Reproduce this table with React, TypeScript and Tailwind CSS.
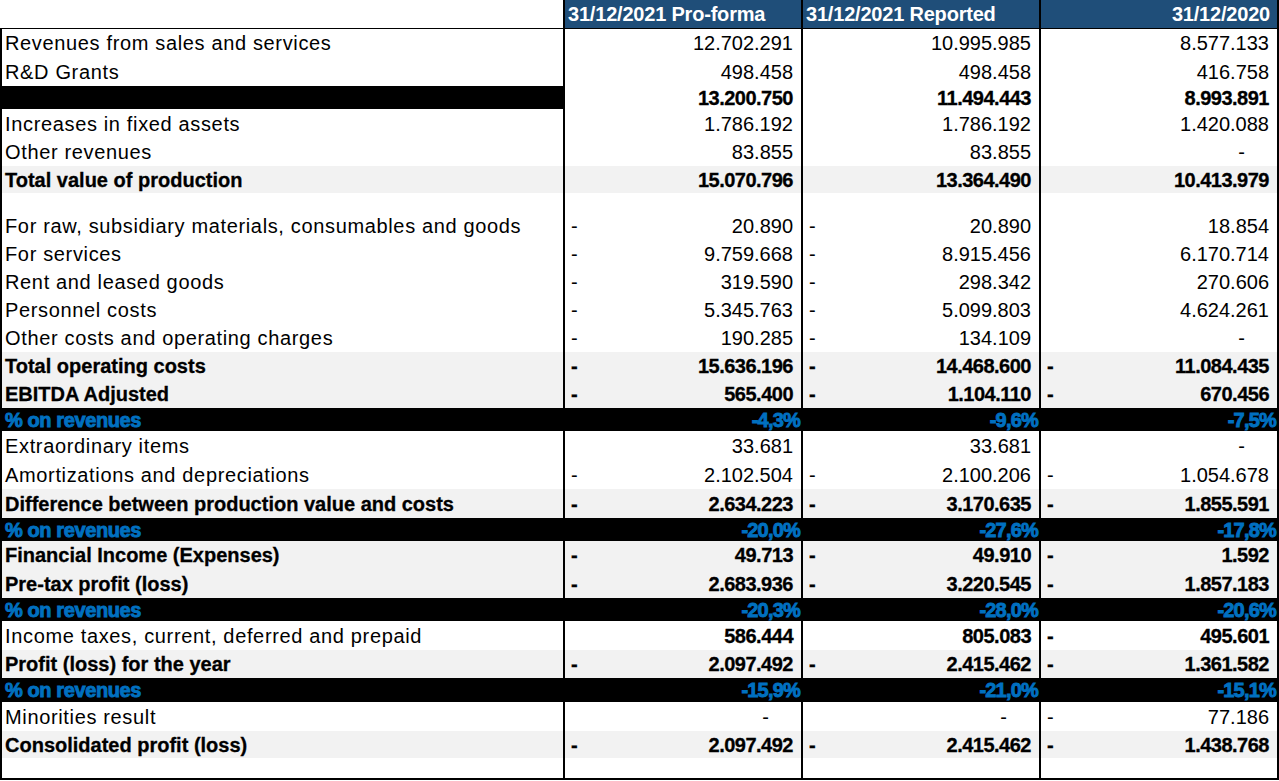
import React from "react";

type Cell = { v?: string; dash?: boolean; zero?: boolean };
type Kind = "normal" | "gray" | "opRev" | "pct" | "empty";
type Row = {
  label?: string;
  kind: Kind;
  h: number;
  boldVals?: boolean;
  cells?: Cell[];
};

const N = (v: string): Cell => ({ v });
const D = (v: string): Cell => ({ v, dash: true });
const Z: Cell = { zero: true };

const rows: Row[] = [
  { label: "Revenues from sales and services", kind: "normal", h: 28, cells: [N("12.702.291"), N("10.995.985"), N("8.577.133")] },
  { label: "R&D Grants", kind: "normal", h: 29, cells: [N("498.458"), N("498.458"), N("416.758")] },
  { label: "Operating revenues", kind: "opRev", h: 23, boldVals: true, cells: [N("13.200.750"), N("11.494.443"), N("8.993.891")] },
  { label: "Increases in fixed assets", kind: "normal", h: 29, cells: [N("1.786.192"), N("1.786.192"), N("1.420.088")] },
  { label: "Other revenues", kind: "normal", h: 28, cells: [N("83.855"), N("83.855"), Z] },
  { label: "Total value of production", kind: "gray", h: 27, boldVals: true, cells: [N("15.070.796"), N("13.364.490"), N("10.413.979")] },
  { kind: "empty", h: 19 },
  { label: "For raw, subsidiary materials, consumables and goods", kind: "normal", h: 28, cells: [D("20.890"), D("20.890"), N("18.854")] },
  { label: "For services", kind: "normal", h: 28, cells: [D("9.759.668"), D("8.915.456"), N("6.170.714")] },
  { label: "Rent and leased goods", kind: "normal", h: 28, cells: [D("319.590"), D("298.342"), N("270.606")] },
  { label: "Personnel costs", kind: "normal", h: 28, cells: [D("5.345.763"), D("5.099.803"), N("4.624.261")] },
  { label: "Other costs and operating charges", kind: "normal", h: 28, cells: [D("190.285"), D("134.109"), Z] },
  { label: "Total operating costs", kind: "gray", h: 28, boldVals: true, cells: [D("15.636.196"), D("14.468.600"), D("11.084.435")] },
  { label: "EBITDA Adjusted", kind: "gray", h: 28, boldVals: true, cells: [D("565.400"), D("1.104.110"), D("670.456")] },
  { label: "% on revenues", kind: "pct", h: 23, cells: [N("-4,3%"), N("-9,6%"), N("-7,5%")] },
  { label: "Extraordinary items", kind: "normal", h: 29, cells: [N("33.681"), N("33.681"), Z] },
  { label: "Amortizations and depreciations", kind: "normal", h: 29, cells: [D("2.102.504"), D("2.100.206"), D("1.054.678")] },
  { label: "Difference between production value and costs", kind: "gray", h: 29, boldVals: true, cells: [D("2.634.223"), D("3.170.635"), D("1.855.591")] },
  { label: "% on revenues", kind: "pct", h: 23, cells: [N("-20,0%"), N("-27,6%"), N("-17,8%")] },
  { label: "Financial Income (Expenses)", kind: "gray", h: 28, boldVals: true, cells: [D("49.713"), D("49.910"), D("1.592")] },
  { label: "Pre-tax profit (loss)", kind: "gray", h: 29, boldVals: true, cells: [D("2.683.936"), D("3.220.545"), D("1.857.183")] },
  { label: "% on revenues", kind: "pct", h: 23, cells: [N("-20,3%"), N("-28,0%"), N("-20,6%")] },
  { label: "Income taxes, current, deferred and prepaid", kind: "normal", h: 29, boldVals: true, cells: [N("586.444"), N("805.083"), D("495.601")] },
  { label: "Profit (loss) for the year", kind: "gray", h: 28, boldVals: true, cells: [D("2.097.492"), D("2.415.462"), D("1.361.582")] },
  { label: "% on revenues", kind: "pct", h: 24, cells: [N("-15,9%"), N("-21,0%"), N("-15,1%")] },
  { label: "Minorities result", kind: "normal", h: 29, cells: [Z, Z, D("77.186")] },
  { label: "Consolidated profit (loss)", kind: "gray", h: 27, boldVals: true, cells: [D("2.097.492"), D("2.415.462"), D("1.438.768")] },
  { kind: "empty", h: 20 },
];

function ValueCell({ c, bold, pct, bg }: { c: Cell; bold?: boolean; pct?: boolean; bg: string }) {
  if (pct) {
    return (
      <div className={`flex items-center justify-end pr-[1px] ${bg} font-bold text-[#0070c0] tracking-[-0.8px] [-webkit-text-stroke:0.9px_#0070c0]`}>
        {c.v}
      </div>
    );
  }
  return (
    <div className={`flex items-center justify-between border-l-2 border-black pl-[6px] pr-[8px] ${bg} ${bold ? "font-bold tracking-[-0.5px] [-webkit-text-stroke:0.3px_#000]" : ""}`}>
      <span>{c.dash ? "-" : ""}</span>
      {c.zero ? <span className="mr-[24px]">-</span> : <span>{c.v}</span>}
    </div>
  );
}

export default function App() {
  return (
    <div className="w-[1279px] h-[781px] bg-white text-black font-['Liberation_Sans',Arial,sans-serif] text-[20px] leading-none overflow-hidden">
      <div className="w-[1279px] border-r-2 border-black">
        {/* Header */}
        <div className="grid grid-cols-[563px_238px_238px_238px] h-[29px] border-b border-black">
          <div className="bg-white" />
          <div className="flex items-center border-l-2 border-black bg-[#1f4e79] pl-[3px] text-white font-bold tracking-[-0.2px]">
            31/12/2021 Pro-forma
          </div>
          <div className="flex items-center border-l-2 border-black bg-[#1f4e79] pl-[3px] text-white font-bold tracking-[-0.2px]">
            31/12/2021 Reported
          </div>
          <div className="flex items-center justify-end border-l-2 border-black bg-[#1f4e79] pr-[7px] text-white font-bold tracking-[-0.2px]">
            31/12/2020
          </div>
        </div>

        {rows.map((r, i) => {
          const gray = r.kind === "gray";
          const pct = r.kind === "pct";
          const bg = pct ? "bg-black" : gray ? "bg-[#f2f2f2]" : "bg-white";
          let labelCls = "";
          if (r.kind === "normal") labelCls = "tracking-[0.65px]";
          if (gray) labelCls = "font-bold [-webkit-text-stroke:0.3px_#000]";
          if (pct) labelCls = "font-bold text-[#0070c0] tracking-[-0.4px] [-webkit-text-stroke:0.9px_#0070c0]";
          if (r.kind === "opRev") labelCls = "font-bold text-black";
          const labelBg = r.kind === "opRev" ? "bg-black" : bg;
          return (
            <div
              key={i}
              className={`grid grid-cols-[563px_238px_238px_238px] ${pct ? "bg-black" : ""}`}
              style={{ height: r.h }}
            >
              <div className={`flex items-center border-l-2 border-black pl-[3px] whitespace-nowrap ${labelBg} ${labelCls}`}>
                {r.label ?? ""}
              </div>
              {r.kind === "empty"
                ? [0, 1, 2].map((k) => <div key={k} className="border-l-2 border-black bg-white" />)
                : r.cells!.map((c, k) => (
                    <ValueCell key={k} c={c} bold={r.boldVals} pct={pct} bg={pct ? "bg-black" : gray ? "bg-[#f2f2f2]" : "bg-white"} />
                  ))}
            </div>
          );
        })}
        <div className="h-[2px] bg-black" />
      </div>
    </div>
  );
}
